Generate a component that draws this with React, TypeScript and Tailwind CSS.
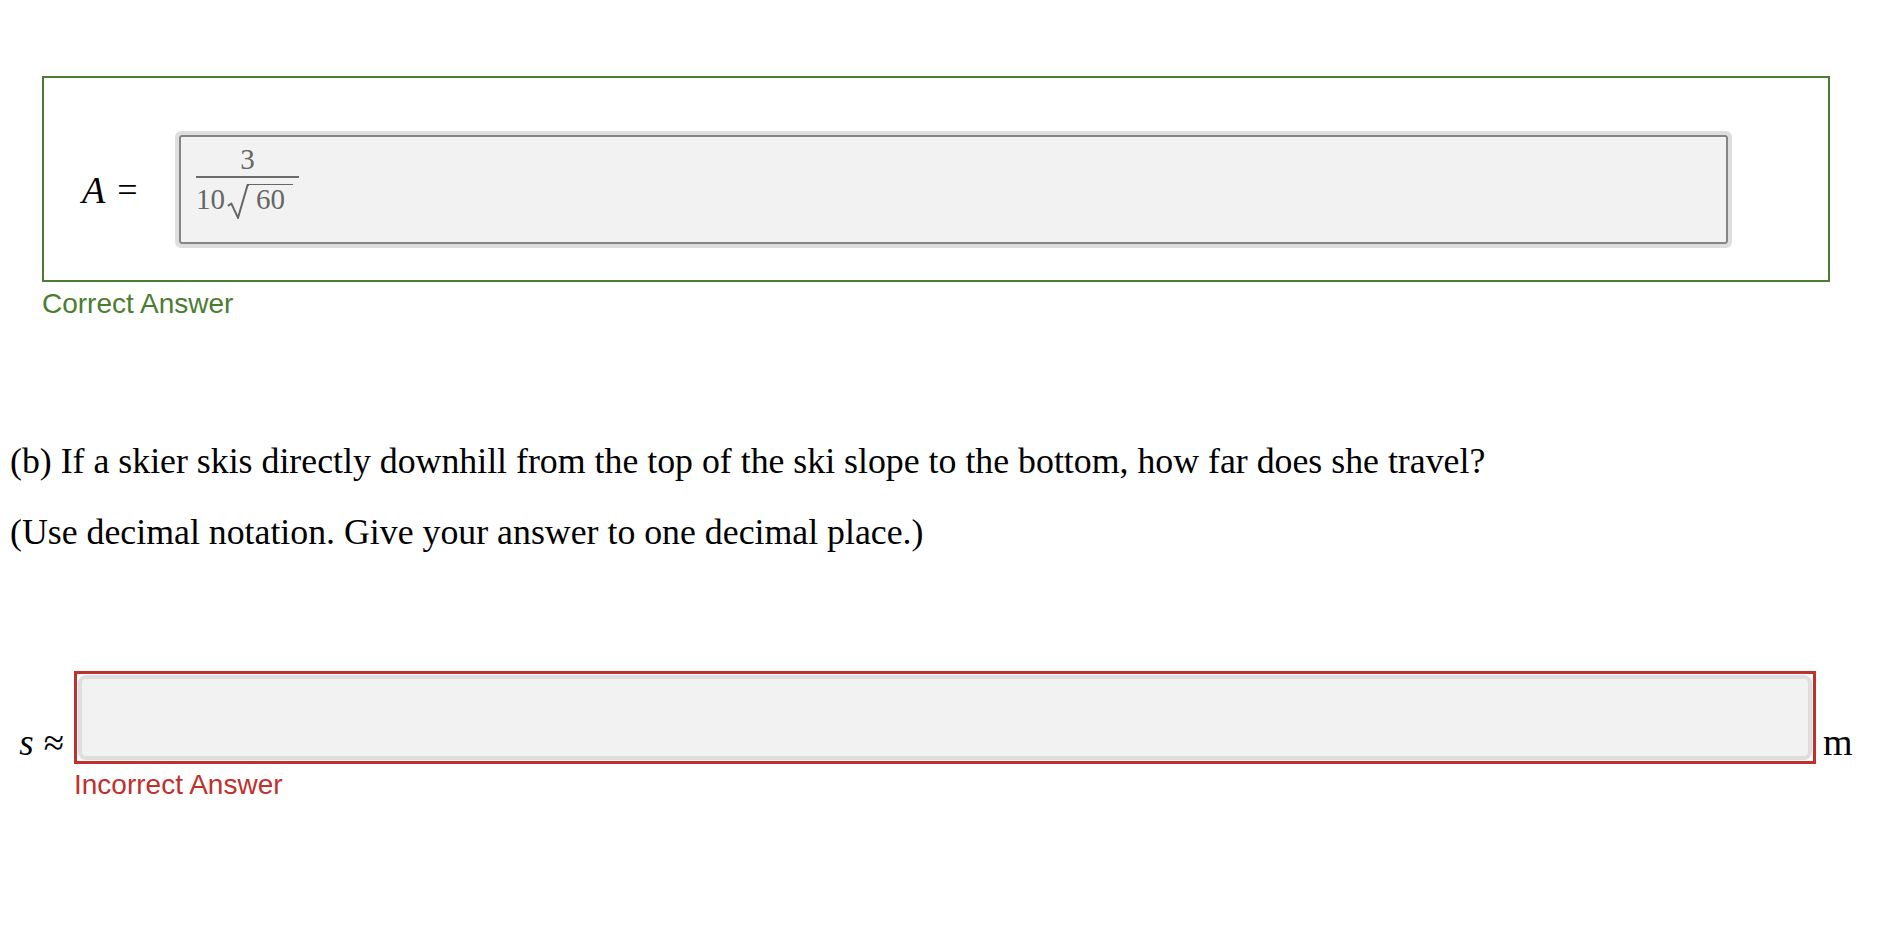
const serif = { fontFamily: '"Liberation Serif", "Times New Roman", serif' };
const sans = { fontFamily: '"Liberation Sans", Arial, Helvetica, sans-serif' };

const Radical = () => (
    <svg width="22" height="35" viewBox="0 0 22 35" className="block shrink-0">
        <path
            d="M0.8 21.8 L4.4 19.6 L11 33.8 L20.6 0.9 L22 0.9"
            fill="none"
            stroke="#666666"
            strokeWidth="2"
            strokeLinejoin="miter"
        />
    </svg>
);

const Fraction = () => (
    <div
        className="inline-flex flex-col items-stretch text-[#666666] text-[29px]"
        style={serif}
    >
        <div className="text-center leading-[29px]">3</div>
        <div className="mt-[2px] h-[2px] bg-[#6b6b6b]" />
        <div className="mt-[6px] flex items-start pr-[6px]">
            <span className="mt-[1px] leading-[29px]">10</span>
            <span className="ml-[2px]">
                <Radical />
            </span>
            <span className="border-t-[1.8px] border-[#666666] pl-[7px] pr-[8px] leading-[29px]">
                60
            </span>
        </div>
    </div>
);

export default function App() {
    return (
        <div className="min-h-[931px] w-full bg-white pt-[76px]">
            {/* part (a) answer, marked correct */}
            <div className="ml-[42px] w-[1788px]">
                <div className="h-[206px] border-2 border-[#4b7d31] pt-[53px]">
                    <div className="flex items-center">
                        <div
                            className="flex w-[131px] items-center pl-[38px] text-[36px] leading-[36px] text-black"
                            style={serif}
                        >
                            <span className="text-[38px] italic">A</span>
                            <span className="ml-[12px]">=</span>
                        </div>
                        <div className="h-[117px] w-[1557px] rounded-[6px] border-4 border-[#dedede]">
                            <div className="h-full rounded-[3px] border-2 border-[#858585] bg-[#f2f2f2] pl-[15px] pt-[8px]">
                                <Fraction />
                            </div>
                        </div>
                    </div>
                </div>
                <p
                    className="mt-[8px] text-[28px] leading-[28px] text-[#4b7d31]"
                    style={sans}
                >
                    Correct Answer
                </p>
            </div>

            {/* part (b) */}
            <div className="pl-[10px] text-[35.8px] leading-[40px] text-black" style={serif}>
                <p className="mt-[123px]">
                    (b) If a skier skis directly downhill from the top of the ski slope to the
                    bottom, how far does she travel?
                </p>
                <p className="mt-[31px]">
                    (Use decimal notation. Give your answer to one decimal place.)
                </p>
            </div>

            <div className="mt-[119px] grid grid-cols-[74px_1742px_auto]">
                <div
                    className="mb-[3px] flex items-end justify-end self-end pr-[10px] text-[37px] leading-[37px] text-black"
                    style={serif}
                >
                    <span className="italic">s</span>
                    <span className="ml-[10px]">≈</span>
                </div>
                <div className="h-[93px] border-[3px] border-[#c0302c] bg-white p-[1px]">
                    <div className="h-full rounded-[8px] border-4 border-[#dedede] bg-[#f2f2f2]" />
                </div>
                <div
                    className="mb-[3px] self-end pl-[7px] text-[38px] leading-[37px] text-black"
                    style={serif}
                >
                    m
                </div>
                <div />
                <p
                    className="mt-[7px] text-[28px] leading-[28px] text-[#c0302c]"
                    style={sans}
                >
                    Incorrect Answer
                </p>
                <div />
            </div>
        </div>
    );
}
